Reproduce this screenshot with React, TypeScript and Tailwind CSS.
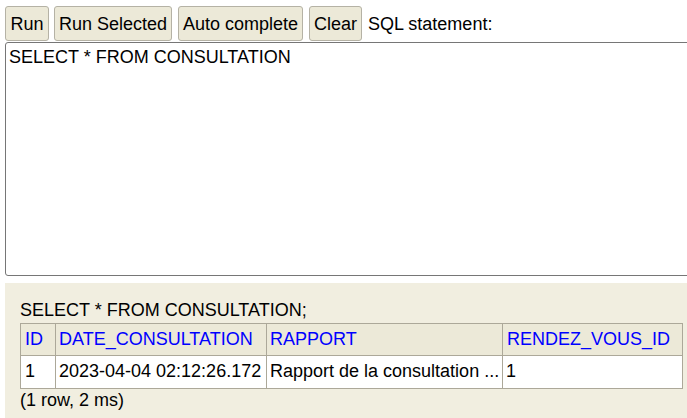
import React from "react";

export default function App() {
  const btn =
    "h-[35px] px-0 bg-[#ece9d8] border border-[#b5b2a5] rounded-[3px] text-black leading-[20px] whitespace-nowrap shrink-0 text-center";
  return (
    <div
      className="w-[687px] h-[418px] overflow-hidden bg-white text-[18px] text-black"
      style={{ fontFamily: '"Liberation Sans", Arial, sans-serif' }}
    >
      <div className="flex items-center pl-[5px] pt-[6px] h-[41px]">
        <button className={btn + " w-[44px]"}>Run</button>
        <button className={btn + " ml-[5px] w-[118px]"}>Run Selected</button>
        <button className={btn + " ml-[6px] w-[125px]"}>Auto complete</button>
        <button className={btn + " ml-[6px] w-[53px]"}>Clear</button>
        <span className="ml-[6px] leading-[20px] whitespace-nowrap">SQL statement:</span>
      </div>
      <div className="ml-[5px] mt-[1px] w-[700px] h-[234px] border border-[#767676] rounded-[3px] px-[3px] pt-[4px] leading-[20px]">
        SELECT * FROM CONSULTATION
      </div>
      <div className="ml-[5px] mt-[7px] w-[700px] h-[140px] bg-[#f1eee0] pl-[15px] pt-[17px]">
        <div className="leading-[20px] h-[23px]">SELECT * FROM CONSULTATION;</div>
        <table className="border-collapse w-[662px] table-fixed leading-[20px]">
          <colgroup>
            <col className="w-[35px]" />
            <col className="w-[211px]" />
            <col className="w-[236px]" />
            <col className="w-[180px]" />
          </colgroup>
          <thead>
            <tr className="bg-[#ece9d8] h-[32px]">
              <th className="border border-[#aca899] text-left font-normal text-[#0000ff] px-[4px] pb-[2px] whitespace-nowrap overflow-hidden">ID</th>
              <th className="border border-[#aca899] text-left font-normal text-[#0000ff] px-[3px] pb-[2px] whitespace-nowrap overflow-hidden">DATE_CONSULTATION</th>
              <th className="border border-[#aca899] text-left font-normal text-[#0000ff] px-[3px] pb-[2px] whitespace-nowrap overflow-hidden">RAPPORT</th>
              <th className="border border-[#aca899] text-left font-normal text-[#0000ff] px-[4px] pb-[2px] whitespace-nowrap overflow-hidden">RENDEZ_VOUS_ID</th>
            </tr>
          </thead>
          <tbody>
            <tr className="bg-white h-[33px]">
              <td className="border border-[#aca899] px-[4px] pb-[2px] whitespace-nowrap overflow-hidden">1</td>
              <td className="border border-[#aca899] px-[3px] pb-[2px] whitespace-nowrap overflow-hidden">2023-04-04 02:12:26.172</td>
              <td className="border border-[#aca899] px-[3px] pb-[2px] whitespace-nowrap overflow-hidden">Rapport de la consultation ...</td>
              <td className="border border-[#aca899] px-[3px] pb-[2px] whitespace-nowrap overflow-hidden">1</td>
            </tr>
          </tbody>
        </table>
        <div className="leading-[20px] mt-[1px]">(1 row, 2 ms)</div>
      </div>
    </div>
  );
}
